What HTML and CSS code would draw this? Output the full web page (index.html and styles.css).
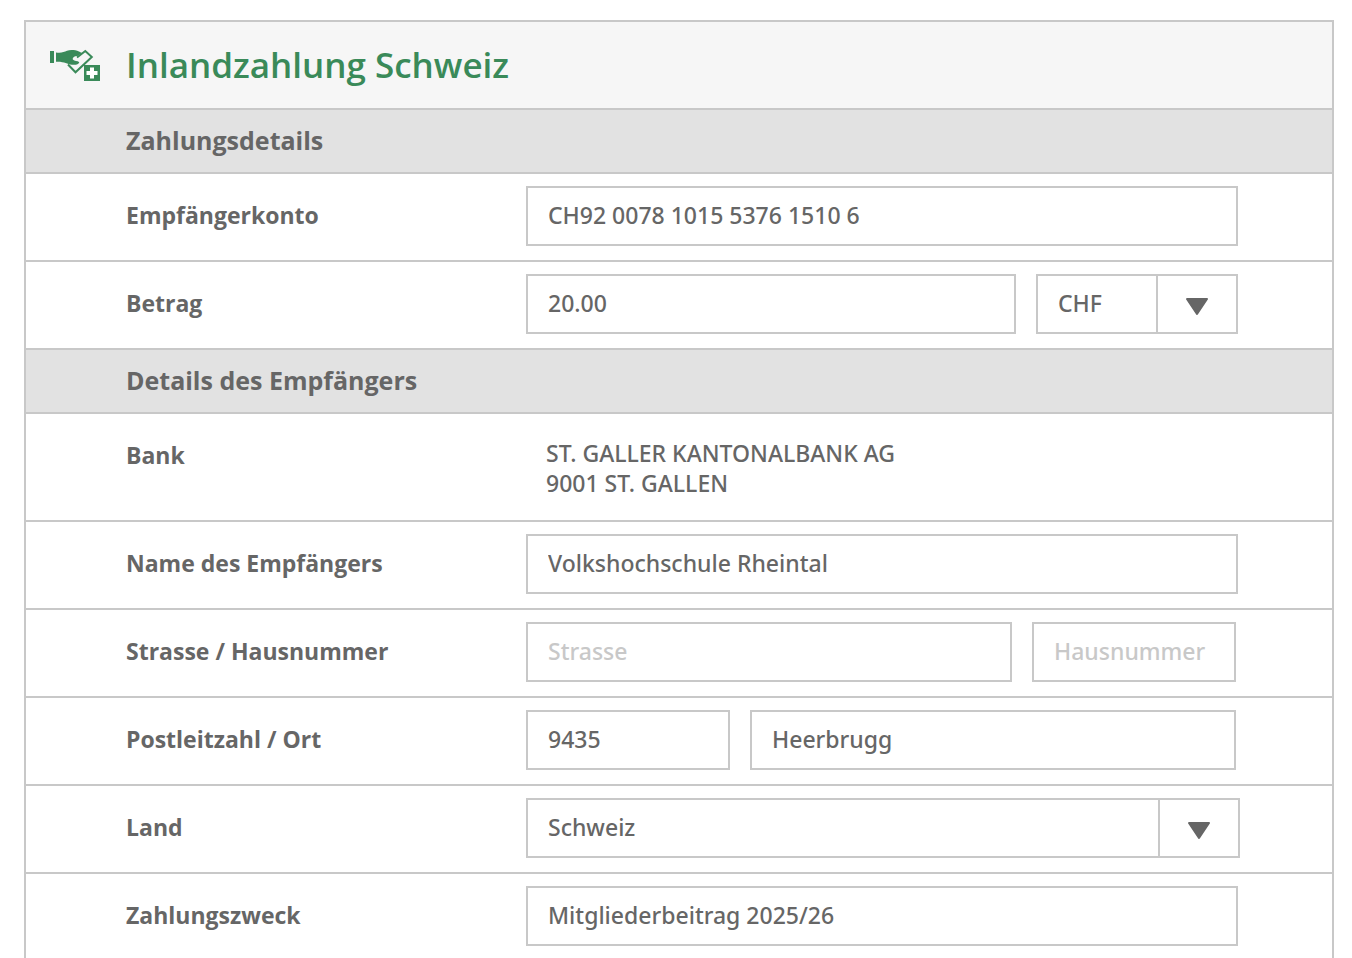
FILE: index.html
```html
<!DOCTYPE html>
<html lang="de">
<head>
  <meta charset="UTF-8">
  <meta name="viewport" content="width=device-width, initial-scale=1">
  <title>Inlandzahlung Schweiz</title>
  <link rel="stylesheet" href="styles.css">
</head>
<body>

  <form class="payment">
    <header class="payment-header">
      <svg class="payment-icon" viewBox="0 0 52 36" aria-hidden="true">
        <path class="card" d="M27 10.5L35.300 4L41.800 10L25.500 25.300L18 17.500"/>
        <rect x="0" y="4" width="4" height="12"/>
        <path d="M6 5.500C11 6.500 14 5 17 3.800C20 2.600 25 2.800 29 4.500L32 6L27.500 9C24.500 9 22.500 10.500 22.800 12.500C24.500 14.300 27.500 13.500 29.300 15.200C28.500 17.800 25.500 18 22 17.700C16.500 17.200 15 14.500 6 14.800Z"/>
        <rect x="34" y="18" width="16" height="16"/>
        <path class="cross" d="M42 20.500V31.500M36.500 26H47.500"/>
      </svg>
      <h1>Inlandzahlung Schweiz</h1>
    </header>

    <h2>Zahlungsdetails</h2>

    <div class="row">
      <label for="konto">Empfängerkonto</label>
      <div class="fields">
        <input id="konto" type="text" value="CH92 0078 1015 5376 1510 6">
      </div>
    </div>

    <div class="row">
      <label for="betrag">Betrag</label>
      <div class="fields">
        <input id="betrag" type="text" value="20.00">
        <div class="select short">
          <select aria-label="Währung">
            <option>CHF</option>
            <option>EUR</option>
          </select>
          <span class="arrow"><svg viewBox="0 0 24 24" aria-hidden="true"><path d="M2 7H22L12 22Z"/></svg></span>
        </div>
      </div>
    </div>

    <h2>Details des Empfängers</h2>

    <div class="row">
      <span class="label">Bank</span>
      <p class="bank">ST. GALLER KANTONALBANK AG<br>9001 ST. GALLEN</p>
    </div>

    <div class="row">
      <label for="name">Name des Empfängers</label>
      <div class="fields">
        <input id="name" type="text" value="Volkshochschule Rheintal">
      </div>
    </div>

    <div class="row">
      <label for="strasse">Strasse / Hausnummer</label>
      <div class="fields pair">
        <input id="strasse" type="text" placeholder="Strasse">
        <input class="short" type="text" placeholder="Hausnummer" aria-label="Hausnummer">
      </div>
    </div>

    <div class="row">
      <label for="plz">Postleitzahl / Ort</label>
      <div class="fields pair">
        <input id="plz" class="short" type="text" value="9435">
        <input type="text" value="Heerbrugg" aria-label="Ort">
      </div>
    </div>

    <div class="row">
      <label for="land">Land</label>
      <div class="fields wide">
        <div class="select">
          <select id="land">
            <option>Schweiz</option>
            <option>Liechtenstein</option>
          </select>
          <span class="arrow"><svg viewBox="0 0 24 24" aria-hidden="true"><path d="M2 7H22L12 22Z"/></svg></span>
        </div>
      </div>
    </div>

    <div class="row">
      <label for="zweck">Zahlungszweck</label>
      <div class="fields">
        <input id="zweck" type="text" value="Mitgliederbeitrag 2025/26">
      </div>
    </div>
  </form>

</body>
</html>
```
FILE: styles.css
```css
* {
  box-sizing: border-box;
}
body {
  margin: 0;
  padding: 20px 18px 0 24px;
  background: #fff;
  color: #666;
  font-family: "Noto Sans", "Open Sans", sans-serif;
  font-size: 23px;
  font-weight: 500;
}
.payment {
  border: 2px solid #c8c8c8;
  border-bottom: 0;
}
.payment-header {
  display: flex;
  align-items: center;
  gap: 24px;
  height: 86px;
  padding-left: 24px;
  background: #f6f6f6;
}
.payment-icon {
  width: 52px;
  height: 36px;
  fill: #3a8a59;
}
.payment-icon .card {
  fill: none;
  stroke: #3a8a59;
  stroke-width: 2;
}
.payment-icon .cross {
  stroke: #fff;
  stroke-width: 4;
}
h1, h2, label, .label {
  font-family: "Open Sans", "Noto Sans", sans-serif;
}
h1 {
  margin: 0;
  color: #3a8a59;
  font-size: 35px;
  font-weight: 600;
  line-height: 48px;
}
h2 {
  margin: 0;
  padding: 0 0 2px 100px;
  border-top: 2px solid #c8c8c8;
  background: #e2e2e2;
  font-size: 25px;
  font-weight: 700;
  line-height: 60px;
}

/* rows */
.row {
  display: grid;
  grid-template-columns: 400px 1fr;
  padding: 12px 0 14px 100px;
  border-top: 2px solid #c8c8c8;
}
.row:last-child {
  padding-bottom: 12px;
}
label, .label {
  font-weight: 700;
  line-height: 58px;
}
.fields {
  display: flex;
  gap: 20px;
  padding-right: 94px;
}
.fields.pair {
  padding-right: 96px;
}
.fields.wide {
  padding-right: 92px;
}
.bank {
  margin: 0;
  padding: 12px 20px 8px;
  line-height: 30px;
}

/* controls */
input, select {
  flex: 1;
  min-width: 0;
  height: 60px;
  margin: 0;
  padding: 0 20px 2px;
  border: 2px solid #c8c8c8;
  border-radius: 0;
  background: #fff;
  color: inherit;
  font: inherit;
}
input::placeholder {
  color: #c8c8c8;
  opacity: 1;
}
input.short {
  flex: 0 0 204px;
}
.select {
  position: relative;
  display: flex;
  flex: 1;
}
.select.short {
  flex: 0 0 202px;
}
select {
  appearance: none;
  padding-right: 90px;
}
.arrow {
  position: absolute;
  top: 2px;
  right: 2px;
  bottom: 2px;
  display: flex;
  align-items: center;
  justify-content: center;
  width: 80px;
  border-left: 2px solid #c8c8c8;
  pointer-events: none;
}
.arrow svg {
  width: 24px;
  height: 24px;
  fill: #666;
  stroke: #666;
  stroke-width: 2;
  stroke-linejoin: round;
}
```
